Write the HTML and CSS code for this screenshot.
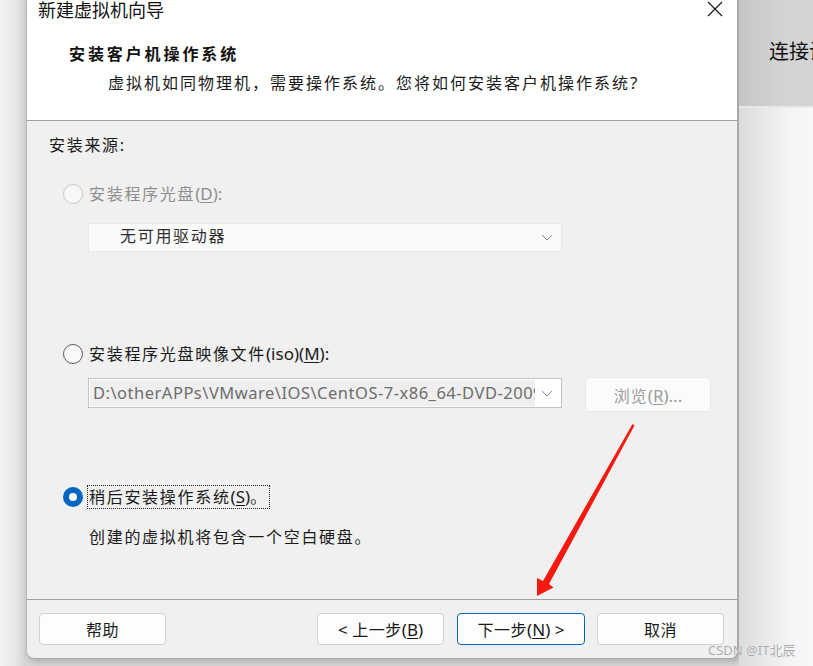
FILE: index.html
```html
<!DOCTYPE html>
<html lang="zh-CN">
<head>
<meta charset="utf-8">
<title>新建虚拟机向导</title>
<link rel="stylesheet" href="styles.css">
</head>
<body>
<div class="page">
  <div class="left-strip"></div>
  <div class="dialog">
    <div class="titlebar">
      <span class="title">新建虚拟机向导</span>
      <svg class="close" width="16" height="16" viewBox="0 0 16 16"><path d="M1 1L15 15M15 1L1 15" stroke="#1a1a1a" stroke-width="1.2" fill="none"/></svg>
    </div>
    <div class="header">
      <div class="heading">安装客户机操作系统</div>
      <div class="subtitle">虚拟机如同物理机，需要操作系统。您将如何安装客户机操作系统<span class="lat">?</span></div>
    </div>
    <div class="content">
      <div class="section-label">安装来源<span class="lat">:</span></div>

      <div class="option option-first is-disabled">
        <span class="radio"></span>
        <span class="label">安装程序光盘<span class="lat">(<u>D</u>):</span></span>
      </div>
      <div class="select select-disabled">
        <span class="select-text">无可用驱动器</span>
        <svg class="chevron" width="12" height="7" viewBox="0 0 12 7"><path d="M1 1L6 6L11 1" stroke="#8a8a8a" stroke-width="1" fill="none"/></svg>
      </div>

      <div class="option option-second">
        <span class="radio radio-enabled"></span>
        <span class="label">安装程序光盘映像文件<span class="lat">(iso)(<u>M</u>):</span></span>
      </div>
      <div class="combo-row">
        <div class="combo">
          <div class="combo-text">D:\otherAPPs\VMware\IOS\CentOS-7-x86_64-DVD-2009.iso</div>
          <svg class="chevron" width="12" height="7" viewBox="0 0 12 7"><path d="M1 1L6 6L11 1" stroke="#8a8a8a" stroke-width="1" fill="none"/></svg>
        </div>
        <div class="browse"><span>浏览<span class="lat">(<u>R</u>)...</span></span></div>
      </div>

      <div class="option option-third">
        <span class="radio radio-checked"></span>
        <span class="label label-focus">稍后安装操作系统<span class="lat">(<u>S</u>)</span>。</span>
      </div>
      <div class="desc">创建的虚拟机将包含一个空白硬盘。</div>
    </div>
    <div class="footer">
      <div class="btn btn-help"><span>帮助</span></div>
      <div class="btn btn-back"><span><span class="lat">&lt;</span> 上一步<span class="lat">(<u>B</u>)</span></span></div>
      <div class="btn btn-next"><span>下一步<span class="lat">(<u>N</u>) &gt;</span></span></div>
      <div class="btn btn-cancel"><span>取消</span></div>
    </div>
  </div>
  <div class="right-panel">
    <div class="right-top">连接设置</div>
    <div class="right-bottom"></div>
  </div>
</div>
<svg class="arrow" width="813" height="666" viewBox="0 0 813 666">
  <polygon points="632.5,424 634.5,425.5 549,584 553.5,587.5 537,596 537,578 543,581" fill="#f5190f"/>
</svg>
<div class="watermark">CSDN @IT北辰</div>
</body>
</html>
```
FILE: styles.css
```css
* { box-sizing: border-box; }
html, body { margin: 0; padding: 0; }
body {
  width: 813px;
  height: 666px;
  overflow: hidden;
  position: relative;
  background: #d6d6d6;
  font-family: "Noto Sans", "Noto Sans CJK SC", sans-serif;
  color: #1a1a1a;
}
.page { display: flex; height: 666px; }
.lat { letter-spacing: 0; }
u { text-decoration-thickness: 1px; text-underline-offset: 2px; }

.left-strip {
  width: 26px;
  flex: none;
  background: linear-gradient(to right, #f4f4f4, #e6e6e6 60%, #d2d2d2);
}

.dialog {
  width: 713px;
  flex: none;
  margin-top: -9px;
  height: 668px;
  display: flex;
  flex-direction: column;
  background: #f0f0f0;
  border-left: 1px solid #b9b9b9;
  border-right: 2px solid #aaaaaa;
  border-bottom: 1px solid #a8a8a8;
  border-radius: 0 0 8px 8px;
  overflow: hidden;
  box-shadow: 2px 3px 6px rgba(0,0,0,0.18);
}

.titlebar {
  height: 36px;
  flex: none;
  background: #fff;
  display: flex;
  align-items: center;
  padding-left: 11px;
}
.title {
  font-family: "Noto Sans CJK SC", sans-serif;
  font-size: 18px;
  line-height: 36px;
  color: #111;
}
.close { margin-left: auto; margin-right: 14px; }

.header {
  height: 94px;
  flex: none;
  background: #fff;
  border-bottom: 1px solid #a0a0a0;
  padding-top: 16px;
}
.heading {
  padding-left: 42px;
  font-size: 16px;
  font-weight: 700;
  letter-spacing: 2.9px;
  line-height: 22px;
  color: #111;
}
.subtitle {
  margin-top: 7px;
  padding-left: 81px;
  font-size: 16px;
  letter-spacing: 2px;
  line-height: 22px;
}
.subtitle .lat { font-size: 17px; }

.content {
  height: 479px;
  flex: none;
  border-bottom: 1px solid #a0a0a0;
  padding: 13px 0 0 22px;
  font-size: 16px;
  letter-spacing: 1.7px;
}
.section-label { line-height: 22px; }
.label .lat { font-size: 17px; }

.option {
  display: flex;
  align-items: center;
  margin-left: 14px;
  height: 24px;
}
.option-first { margin-top: 26px; }
.option-second { margin-top: 90px; }
.option-third { margin-top: 73px; }

.radio {
  width: 20px;
  height: 20px;
  border-radius: 50%;
  border: 1px solid #c8c8c8;
  background: #f7f7f7;
  flex: none;
  margin-right: 4px;
  position: relative;
}
.radio-enabled { border-color: #5c5c5c; background: #f9f9f9; }
.radio-checked { border: none; background: #0067c0; }
.radio-checked::after {
  content: "";
  position: absolute;
  left: 6px; top: 6px;
  width: 8px; height: 8px;
  border-radius: 50%;
  background: #fff;
}
.label {
  border: 1px solid transparent;
  padding: 0 1px;
  line-height: 22px;
}
.label-focus { border: 1px dotted #222; }
.is-disabled .label { color: #8e8e8e; }

.select {
  margin-left: 39px;
  width: 474px;
  height: 29px;
  display: flex;
  align-items: center;
}
.select-disabled {
  margin-top: 17px;
  background: #fafafa;
  border: 1px solid #e8e8e8;
  padding-left: 31px;
  color: #303030;
}
.select-text { line-height: 22px; margin-top: -4px; }
.chevron { margin-left: auto; margin-right: 8px; flex: none; }

.combo-row {
  display: flex;
  align-items: flex-start;
  margin-left: 39px;
  margin-top: 11px;
  letter-spacing: 0;
}
.combo {
  margin-top: 1px;
  width: 474px;
  height: 30px;
  border: 1px solid #c2c2c2;
  background: #fff;
  display: flex;
  align-items: center;
}
.combo-text {
  width: 445px;
  height: 26px;
  margin: 1px;
  background: #efefef;
  color: #6d6d6d;
  white-space: nowrap;
  overflow: hidden;
  padding-left: 3px;
  line-height: 25px;
  font-size: 16.5px;
  letter-spacing: 0.5px;
  flex: none;
}
.browse {
  margin-left: 23px;
  width: 126px;
  height: 35px;
  border: 1px solid #e6e6e6;
  border-radius: 4px;
  background: #fbfbfb;
  color: #9c9c9c;
  display: flex;
  align-items: center;
  justify-content: center;
  font-size: 16px;
  letter-spacing: 1px;
}
.browse .lat { font-size: 17px; }

.desc {
  margin-top: 17px;
  padding-left: 40px;
  line-height: 22px;
}

.footer {
  height: 58px;
  flex: none;
  display: flex;
  align-items: flex-start;
  padding: 13px 13px 0 12px;
}
.btn {
  height: 32px;
  width: 127px;
  border: 1px solid #d2d2d2;
  border-radius: 4px;
  background: #fdfdfd;
  display: flex;
  align-items: center;
  justify-content: center;
  font-size: 16px;
  letter-spacing: 0.5px;
  color: #1a1a1a;
  white-space: pre;
}
.btn .lat { font-size: 17px; }
.btn-back { margin-left: auto; }
.btn-next { margin-left: 13px; width: 128px; border-color: #0067c0; }
.btn-cancel { margin-left: 12px; }

.right-panel {
  flex: 1;
  display: flex;
  flex-direction: column;
}
.right-top {
  height: 108px;
  flex: none;
  background: linear-gradient(to right, #c6c6c6, #d3d3d3 40%, #d6d6d6);
  border-bottom: 2px solid #e8e8e8;
  padding: 38px 0 0 30px;
  font-family: "Noto Sans CJK SC", sans-serif;
  font-size: 20px;
  line-height: 26px;
  white-space: nowrap;
  overflow: hidden;
  color: #111;
}
.right-bottom {
  flex: 1;
  background: linear-gradient(to right, #dcdcdc, #f4f4f4 45%, #ffffff);
}

.arrow {
  position: absolute;
  left: 0; top: 0;
  pointer-events: none;
}
.watermark {
  position: absolute;
  left: 708px;
  top: 641px;
  font-size: 13px;
  line-height: 18px;
  color: #ababab;
  text-shadow: 0 0 1px #ffffff;
  white-space: nowrap;
}
```
